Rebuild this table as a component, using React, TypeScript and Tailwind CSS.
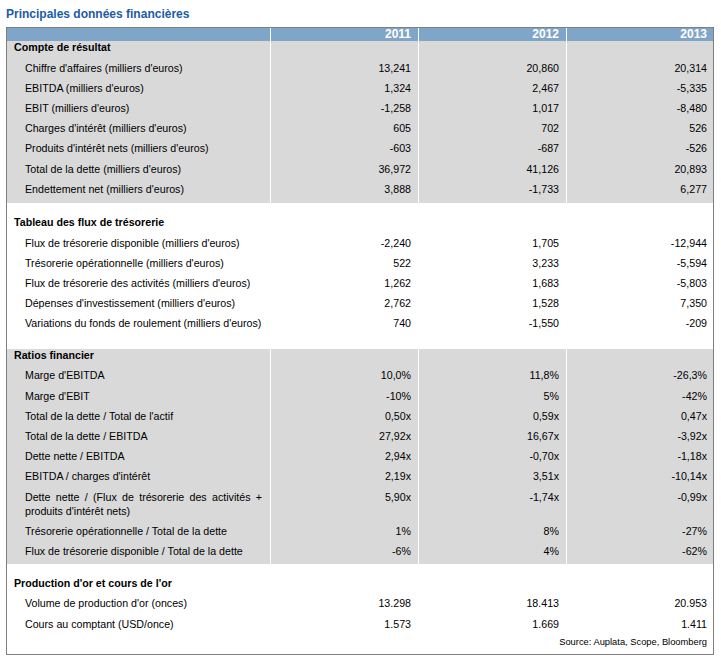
import React from "react";

type Row = { label: string; v: [string, string, string]; wrap?: boolean };
type Section = { title: string; gray: boolean; top: number; bottom: number; rows: Row[]; source?: boolean };

const sections: Section[] = [
  {
    title: "Compte de résultat",
    gray: true,
    top: 0,
    bottom: 4.1,
    rows: [
      { label: "Chiffre d'affaires (milliers d'euros)", v: ["13,241", "20,860", "20,314"] },
      { label: "EBITDA (milliers d'euros)", v: ["1,324", "2,467", "-5,335"] },
      { label: "EBIT (milliers d'euros)", v: ["-1,258", "1,017", "-8,480"] },
      { label: "Charges d'intérêt (milliers d'euros)", v: ["605", "702", "526"] },
      { label: "Produits d'intérêt nets (milliers d'euros)", v: ["-603", "-687", "-526"] },
      { label: "Total de la dette (milliers d'euros)", v: ["36,972", "41,126", "20,893"] },
      { label: "Endettement net (milliers d'euros)", v: ["3,888", "-1,733", "6,277"] },
    ],
  },
  {
    title: "Tableau des flux de trésorerie",
    gray: false,
    top: 13,
    bottom: 15.5,
    rows: [
      { label: "Flux de trésorerie disponible (milliers d'euros)", v: ["-2,240", "1,705", "-12,944"] },
      { label: "Trésorerie opérationnelle (milliers d'euros)", v: ["522", "3,233", "-5,594"] },
      { label: "Flux de trésorerie des activités (milliers d'euros)", v: ["1,262", "1,683", "-5,803"] },
      { label: "Dépenses d'investissement (milliers d'euros)", v: ["2,762", "1,528", "7,350"] },
      { label: "Variations du fonds de roulement (milliers d'euros)", v: ["740", "-1,550", "-209"] },
    ],
  },
  {
    title: "Ratios financier",
    gray: true,
    top: 0,
    bottom: 2.7,
    rows: [
      { label: "Marge d'EBITDA", v: ["10,0%", "11,8%", "-26,3%"] },
      { label: "Marge d'EBIT", v: ["-10%", "5%", "-42%"] },
      { label: "Total de la dette / Total de l'actif", v: ["0,50x", "0,59x", "0,47x"] },
      { label: "Total de la dette / EBITDA", v: ["27,92x", "16,67x", "-3,92x"] },
      { label: "Dette nette / EBITDA", v: ["2,94x", "-0,70x", "-1,18x"] },
      { label: "EBITDA / charges d'intérêt", v: ["2,19x", "3,51x", "-10,14x"] },
      {
        label: "Dette nette / (Flux de trésorerie des activités + produits d'intérêt nets)",
        v: ["5,90x", "-1,74x", "-0,99x"],
        wrap: true,
      },
      { label: "Trésorerie opérationnelle / Total de la dette", v: ["1%", "8%", "-27%"] },
      { label: "Flux de trésorerie disponible / Total de la dette", v: ["-6%", "4%", "-62%"] },
    ],
  },
  {
    title: "Production d'or et cours de l'or",
    gray: false,
    top: 13,
    bottom: 0,
    source: true,
    rows: [
      { label: "Volume de production d'or (onces)", v: ["13.298", "18.413", "20.953"] },
      { label: "Cours au comptant (USD/once)", v: ["1.573", "1.669", "1.411"] },
    ],
  },
];

function Spacer({ h }: { h: number }) {
  if (h <= 0) return null;
  return (
    <>
      <div style={{ height: h }} />
      <div className="border-l border-white" style={{ height: h }} />
      <div className="border-l border-white" style={{ height: h }} />
      <div className="border-l border-white" style={{ height: h }} />
    </>
  );
}

export default function App() {
  return (
    <div
      className="w-[721px] h-[662px] bg-white text-black"
      style={{ fontFamily: '"Liberation Sans", Arial, sans-serif' }}
    >
      <div className="h-[27px] pt-[7px] pl-[6px] text-[12px] leading-[14px] font-bold text-[#1c5ba6]">
        Principales données financières
      </div>
      <div className="ml-[6px] w-[708px] border border-[#7f7f7f] text-[10.67px]">
        <div className="grid grid-cols-[263px_148px_148px_147px] bg-[#7fa5c8] text-white font-bold text-[12px] h-[13px] leading-[13px]">
          <div />
          <div className="border-l border-white text-right pr-[7px]">2011</div>
          <div className="border-l border-white text-right pr-[7px]">2012</div>
          <div className="border-l border-white text-right pr-[6px]">2013</div>
        </div>
        {sections.map((s, si) => (
          <div
            key={si}
            className={`grid grid-cols-[263px_148px_148px_147px] ${s.gray ? "bg-[#d9d9d9]" : "bg-white"}`}
          >
            <Spacer h={s.top} />
            <div className="pl-[7px] h-[13px] leading-[13px] font-bold whitespace-nowrap">{s.title}</div>
            <div className="border-l border-white" />
            <div className="border-l border-white" />
            <div className="border-l border-white" />
            <Spacer h={3.5} />
            {s.rows.map((r, ri) => (
              <React.Fragment key={ri}>
                <div className="pl-[18px] py-[3.1px] leading-[14px]">
                  {r.wrap ? (
                    <div className="w-[237px] text-justify">{r.label}</div>
                  ) : (
                    <span className="whitespace-nowrap">{r.label}</span>
                  )}
                </div>
                <div className="border-l border-white text-right pr-[7px] py-[3.1px] leading-[14px]">{r.v[0]}</div>
                <div className="border-l border-white text-right pr-[7px] py-[3.1px] leading-[14px]">{r.v[1]}</div>
                <div className="border-l border-white text-right pr-[6px] py-[3.1px] leading-[14px]">{r.v[2]}</div>
              </React.Fragment>
            ))}
            {s.source && (
              <div className="col-span-4 text-right pr-[6px] pt-[2.2px] pb-[4.9px] text-[9.33px] leading-[13px]">
                Source: Auplata, Scope, Bloomberg
              </div>
            )}
            <Spacer h={s.bottom} />
          </div>
        ))}
      </div>
    </div>
  );
}
